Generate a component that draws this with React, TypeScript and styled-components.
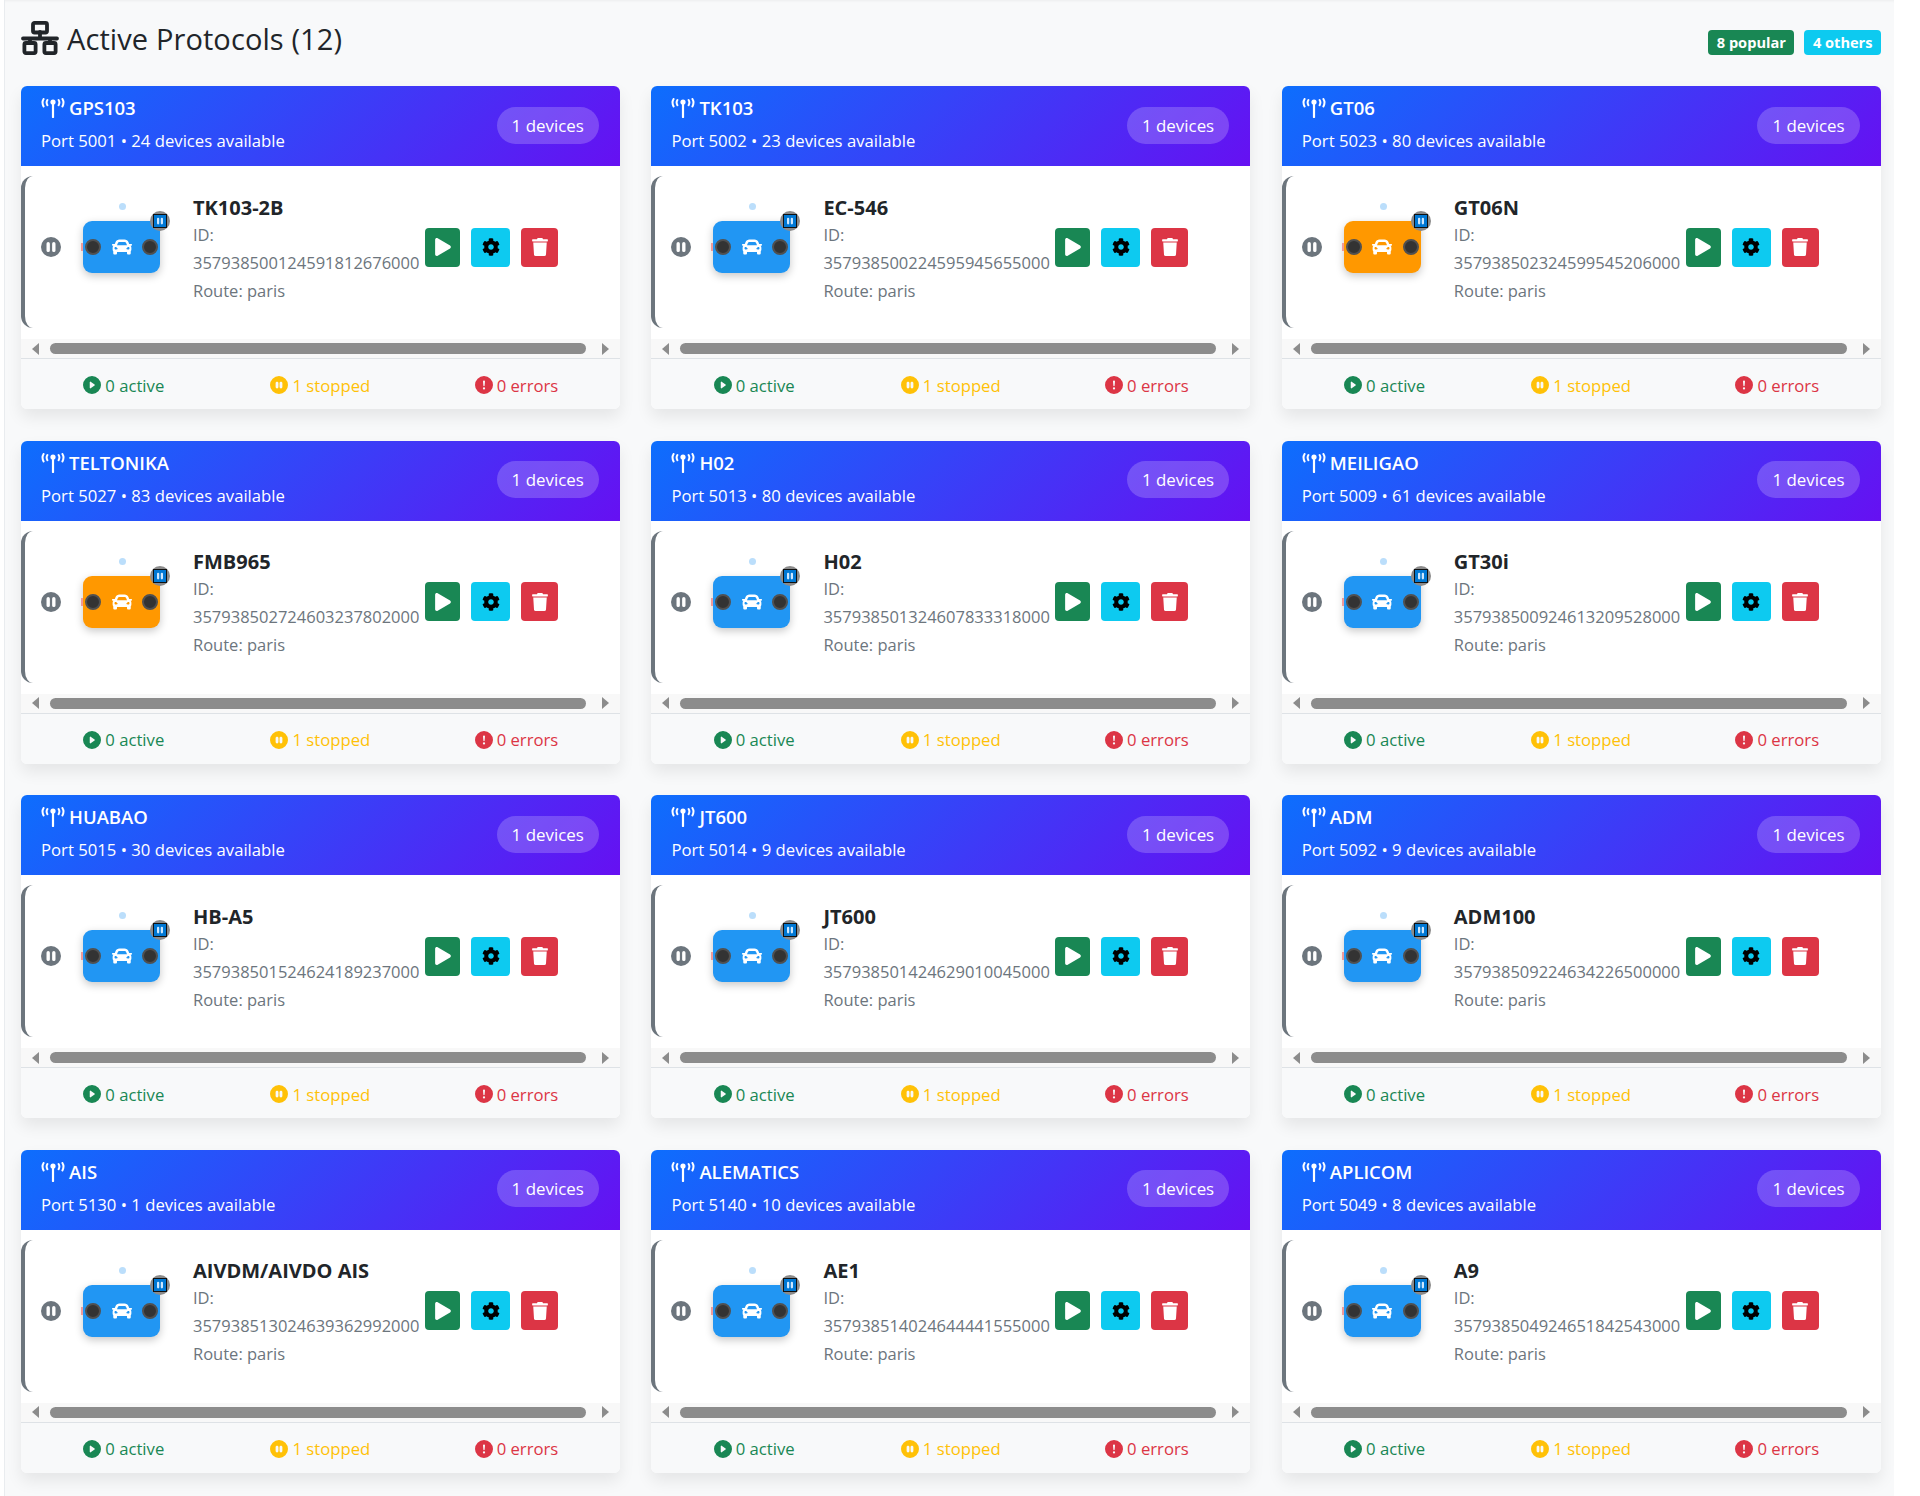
import React from "react";
import styled, { createGlobalStyle } from "styled-components";
import {
  BsExclamationCircleFill,
  BsPauseCircleFill,
  BsPauseFill,
  BsPlayCircleFill,
} from "react-icons/bs";
import { FaCar, FaCog, FaPlay, FaTrash } from "react-icons/fa";

type Protocol = {
  name: string;
  port: number;
  available: number;
  model: string;
  id: string;
  car?: string;
};

const BLUE_CAR = "#2196f3";
const ORANGE_CAR = "#ff9800";

const protocols: Protocol[] = [
  { name: "GPS103", port: 5001, available: 24, model: "TK103-2B", id: "357938500124591812676000" },
  { name: "TK103", port: 5002, available: 23, model: "EC-546", id: "357938500224595945655000" },
  { name: "GT06", port: 5023, available: 80, model: "GT06N", id: "357938502324599545206000", car: ORANGE_CAR },
  { name: "TELTONIKA", port: 5027, available: 83, model: "FMB965", id: "357938502724603237802000", car: ORANGE_CAR },
  { name: "H02", port: 5013, available: 80, model: "H02", id: "357938501324607833318000" },
  { name: "MEILIGAO", port: 5009, available: 61, model: "GT30i", id: "357938500924613209528000" },
  { name: "HUABAO", port: 5015, available: 30, model: "HB-A5", id: "357938501524624189237000" },
  { name: "JT600", port: 5014, available: 9, model: "JT600", id: "357938501424629010045000" },
  { name: "ADM", port: 5092, available: 9, model: "ADM100", id: "357938509224634226500000" },
  { name: "AIS", port: 5130, available: 1, model: "AIVDM/AIVDO AIS", id: "357938513024639362992000" },
  { name: "ALEMATICS", port: 5140, available: 10, model: "AE1", id: "357938514024644441555000" },
  { name: "APLICOM", port: 5049, available: 8, model: "A9", id: "357938504924651842543000" },
];

const GlobalStyle = createGlobalStyle`
  html, body {
    margin: 0;
    padding: 0;
    background: #fff;
    font-family: "Open Sans", "Noto Sans", sans-serif;
    color: #212529;
  }
  * { box-sizing: border-box; }
`;

const Page = styled.div`
  width: 1890px;
  height: 1496px;
  margin-left: 4px;
  padding: 0 13px 0 16px;
  background: #f8f9fa;
  border-left: 1px solid #e9ecef;
  box-shadow: inset 0 3px 3px -2px rgba(0, 0, 0, 0.05);
`;

const TopBar = styled.div`
  display: flex;
  align-items: center;
  justify-content: space-between;
  height: 86px;
  padding-bottom: 8px;
`;

const Title = styled.h2`
  display: flex;
  align-items: center;
  gap: 8px;
  margin: 0 0 2px;
  font-size: 29px;
  font-weight: 500;
  letter-spacing: 0.1px;
  color: #212529;
`;

const Badges = styled.div`
  display: flex;
  gap: 10px;
  margin-top: 6px;
`;

const Badge = styled.span<{ $bg: string }>`
  display: flex;
  align-items: center;
  justify-content: center;
  height: 25px;
  padding: 0 8.5px;
  border-radius: 4px;
  background: ${(p) => p.$bg};
  color: #fff;
  font-size: 14.6px;
  font-weight: 700;
`;

const Grid = styled.div`
  display: grid;
  grid-template-columns: repeat(3, 598.8px);
  grid-auto-rows: 323px;
  column-gap: 31.6px;
  row-gap: 31.67px;
`;

const Card = styled.section`
  display: flex;
  flex-direction: column;
  border-radius: 6px;
  background: #fff;
  overflow: hidden;
  box-shadow: 0 8px 16px rgba(0, 0, 0, 0.08);
`;

const CardHeader = styled.header`
  display: flex;
  flex: none;
  align-items: center;
  justify-content: space-between;
  height: 80px;
  padding: 0 21px 2px 20px;
  background: linear-gradient(135deg, #0d6efd, #6610f2);
  color: #fff;
`;

const CardTitles = styled.div`
  padding-bottom: 2px;
`;

const CardName = styled.div`
  display: flex;
  align-items: center;
  gap: 4px;
  font-size: 18.5px;
  font-weight: 600;
  line-height: 24px;
`;

const CardPort = styled.div`
  margin-top: 10px;
  font-size: 16.7px;
  line-height: 22px;
`;

const DevicesPill = styled.span`
  display: flex;
  align-items: center;
  height: 37px;
  padding: 0 15px;
  border-radius: 19px;
  background: rgba(255, 255, 255, 0.2);
  font-size: 16.9px;
`;

const Body = styled.div`
  flex: 1;
  padding-top: 10px;
  background: #fff;
`;

const DeviceRow = styled.div`
  display: flex;
  align-items: center;
  height: 152px;
  padding: 0 0 10px 16px;
  border-left: 4px solid #6c757d;
  border-radius: 12px;
`;

const PauseDot = styled.span`
  display: flex;
  align-items: center;
  justify-content: center;
  width: 20px;
  height: 20px;
  border-radius: 50%;
  background: #6c757d;
  color: #fff;
  svg {
    width: 18px;
    height: 18px;
  }
`;

const CarBox = styled.div<{ $bg: string }>`
  position: relative;
  display: flex;
  align-items: center;
  justify-content: space-between;
  width: 77px;
  height: 52px;
  margin: 0 33px 0 22px;
  padding: 0 2px;
  border-radius: 9px;
  background: ${(p) => p.$bg};
  box-shadow: 0 3px 8px rgba(0, 0, 0, 0.22);
  color: #fff;
  svg {
    width: 20px;
    height: 20px;
  }
`;

const Wheel = styled.span`
  width: 16px;
  height: 16px;
  border-radius: 50%;
  background: #333;
  border: 2px solid #505050;
`;

const Beacon = styled.span`
  position: absolute;
  top: -18px;
  left: 36px;
  width: 7px;
  height: 7px;
  border-radius: 50%;
  background: #bbdefb;
`;

const Tail = styled.span`
  position: absolute;
  top: 22px;
  left: -2px;
  width: 2px;
  height: 8px;
  background: #ef9a9a;
`;

const StatusChip = styled.span`
  position: absolute;
  top: -10px;
  right: -10px;
  display: flex;
  align-items: center;
  justify-content: center;
  width: 20px;
  height: 20px;
  border-radius: 50%;
  background: #8a8a8a;
`;

const ChipInner = styled.span`
  display: flex;
  align-items: center;
  justify-content: center;
  width: 14px;
  height: 14px;
  background: #0078d4;
  border: 1px solid #111;
  color: #cfe8ff;
  svg {
    width: 12px;
    height: 12px;
  }
`;

const DeviceInfo = styled.div`
  width: 232px;
  flex: none;
  padding-top: 5px;
`;

const DeviceName = styled.div`
  font-size: 20px;
  font-weight: 700;
  line-height: 26px;
  color: #212529;
`;

const DeviceMeta = styled.div`
  color: #6c757d;
  font-size: 16.5px;
  line-height: 28px;
`;

const Actions = styled.div`
  display: flex;
  gap: 11px;
`;

const ActionButton = styled.button<{ $bg: string; $w: number; $fg?: string }>`
  display: flex;
  align-items: center;
  justify-content: center;
  width: ${(p) => p.$w}px;
  height: 39px;
  padding: 0;
  border: 0;
  border-radius: 4px;
  background: ${(p) => p.$bg};
  color: ${(p) => p.$fg ?? "#fff"};
  svg {
    width: 18px;
    height: 18px;
  }
`;

const ScrollTrack = styled.div`
  display: flex;
  align-items: center;
  height: 20px;
  margin-top: 11px;
  padding: 0 11px;
  background: #f8f8f8;
  border-bottom: 1px solid #dee2e6;
`;

const Arrow = styled.span<{ $dir: "left" | "right" }>`
  width: 0;
  height: 0;
  border-top: 6px solid transparent;
  border-bottom: 6px solid transparent;
  ${(p) =>
    p.$dir === "left"
      ? "border-right: 7px solid #8c8c8c;"
      : "border-left: 7px solid #8c8c8c;"}
`;

const Thumb = styled.span`
  flex: 1;
  height: 11px;
  margin: 0 16px 0 11px;
  border-radius: 6px;
  background: #8c8c8c;
`;

const Footer = styled.footer`
  display: grid;
  flex: none;
  grid-template-columns: repeat(3, 1fr);
  height: 50px;
  padding-top: 2px;
  background: #f8f9fa;
`;

const Stat = styled.div<{ $color: string; $pl?: number; $pr?: number }>`
  display: flex;
  align-items: center;
  justify-content: center;
  gap: 4px;
  padding: 0 ${(p) => p.$pr ?? 0}px 0 ${(p) => p.$pl ?? 0}px;
  color: ${(p) => p.$color};
  font-size: 16.7px;
  svg {
    width: 18px;
    height: 18px;
  }
`;

const NetworkIcon = () => (
  <svg width="38" height="34" viewBox="0 0 38 34" fill="none" stroke="#212529" strokeWidth="3.8">
    <rect x="12" y="1.9" width="14" height="9.6" rx="1.5" />
    <path d="M19 11v6M2 17.5h34" strokeLinecap="round" />
    <path d="M9 18v5M29 18v5" />
    <rect x="3.4" y="22" width="11.2" height="10.1" rx="1.5" />
    <rect x="23.4" y="22" width="11.2" height="10.1" rx="1.5" />
  </svg>
);

const AntennaIcon = () => (
  <svg width="24" height="20" viewBox="0 0 24 20" fill="none" stroke="#fff" strokeWidth="2" strokeLinecap="round">
    <circle cx="12" cy="4" r="2.6" fill="#fff" stroke="none" />
    <path d="M12 5l0 14" strokeWidth="2.2" />
    <path d="M2.6 1Q.4 4.5 2.6 8.4M6.4 2Q4.8 4.5 6.4 7.2" />
    <path d="M21.4 1Q23.6 4.5 21.4 8.4M17.6 2Q19.2 4.5 17.6 7.2" />
  </svg>
);

const ProtocolCard: React.FC<{ protocol: Protocol }> = ({ protocol }) => (
  <Card>
    <CardHeader>
      <CardTitles>
        <CardName>
          <AntennaIcon />
          {protocol.name}
        </CardName>
        <CardPort>
          Port {protocol.port} • {protocol.available} devices available
        </CardPort>
      </CardTitles>
      <DevicesPill>1 devices</DevicesPill>
    </CardHeader>
    <Body>
      <DeviceRow>
        <PauseDot>
          <BsPauseFill />
        </PauseDot>
        <CarBox $bg={protocol.car ?? BLUE_CAR}>
          <Beacon />
          <Tail />
          <Wheel />
          <FaCar />
          <Wheel />
          <StatusChip>
            <ChipInner>
              <BsPauseFill />
            </ChipInner>
          </StatusChip>
        </CarBox>
        <DeviceInfo>
          <DeviceName>{protocol.model}</DeviceName>
          <DeviceMeta>ID:</DeviceMeta>
          <DeviceMeta>{protocol.id}</DeviceMeta>
          <DeviceMeta>Route: paris</DeviceMeta>
        </DeviceInfo>
        <Actions>
          <ActionButton $bg="#198754" $w={35}>
            <FaPlay />
          </ActionButton>
          <ActionButton $bg="#0dcaf0" $w={39} $fg="#000">
            <FaCog />
          </ActionButton>
          <ActionButton $bg="#dc3545" $w={37}>
            <FaTrash />
          </ActionButton>
        </Actions>
      </DeviceRow>
      <ScrollTrack>
        <Arrow $dir="left" />
        <Thumb />
        <Arrow $dir="right" />
      </ScrollTrack>
    </Body>
    <Footer>
      <Stat $color="#198754" $pl={6}>
        <BsPlayCircleFill />0 active
      </Stat>
      <Stat $color="#ffc107">
        <BsPauseCircleFill />1 stopped
      </Stat>
      <Stat $color="#dc3545" $pr={7}>
        <BsExclamationCircleFill />0 errors
      </Stat>
    </Footer>
  </Card>
);

export default function App() {
  return (
    <>
      <GlobalStyle />
      <Page>
        <TopBar>
          <Title>
            <NetworkIcon />
            Active Protocols (12)
          </Title>
          <Badges>
            <Badge $bg="#198754">8 popular</Badge>
            <Badge $bg="#0dcaf0">4 others</Badge>
          </Badges>
        </TopBar>
        <Grid>
          {protocols.map((p) => (
            <ProtocolCard key={p.name} protocol={p} />
          ))}
        </Grid>
      </Page>
    </>
  );
}
